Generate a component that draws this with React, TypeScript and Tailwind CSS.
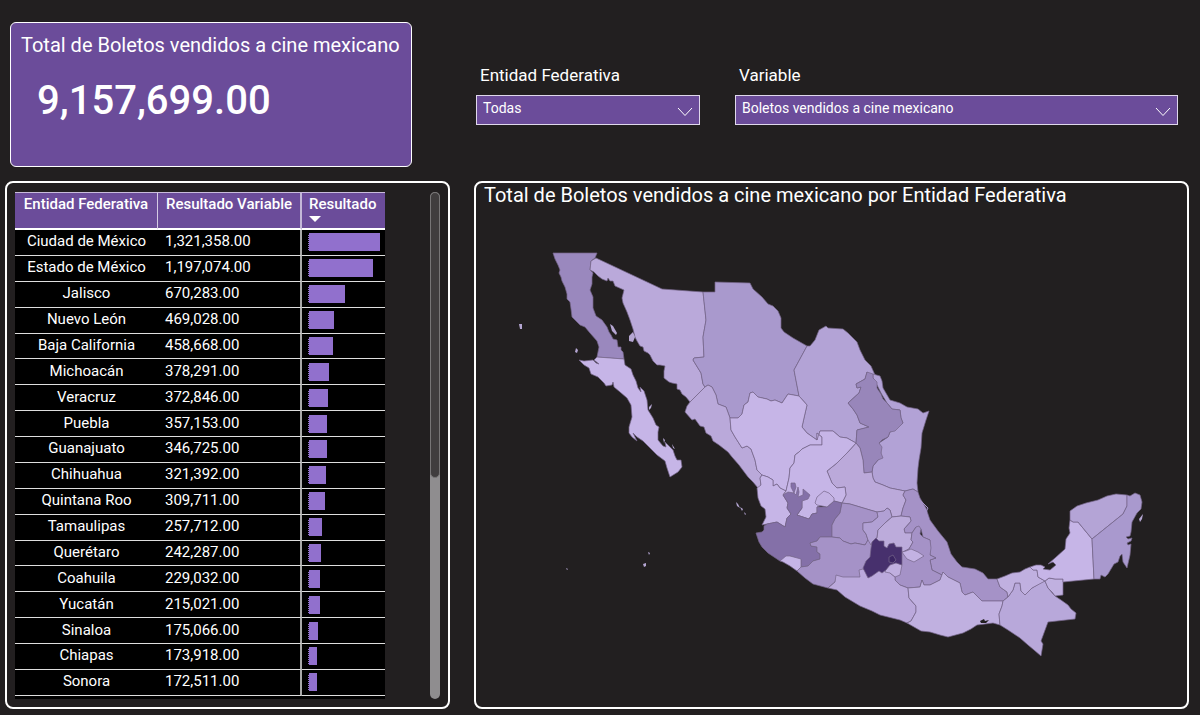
import { useState } from 'react';

type Row = { name: string; value: number };

const rows: Row[] = [
  { name: 'Ciudad de México', value: 1321358 },
  { name: 'Estado de México', value: 1197074 },
  { name: 'Jalisco', value: 670283 },
  { name: 'Nuevo León', value: 469028 },
  { name: 'Baja California', value: 458668 },
  { name: 'Michoacán', value: 378291 },
  { name: 'Veracruz', value: 372846 },
  { name: 'Puebla', value: 357153 },
  { name: 'Guanajuato', value: 346725 },
  { name: 'Chihuahua', value: 321392 },
  { name: 'Quintana Roo', value: 309711 },
  { name: 'Tamaulipas', value: 257712 },
  { name: 'Querétaro', value: 242287 },
  { name: 'Coahuila', value: 229032 },
  { name: 'Yucatán', value: 215021 },
  { name: 'Sinaloa', value: 175066 },
  { name: 'Chiapas', value: 173918 },
  { name: 'Sonora', value: 172511 },
];

const max = rows[0].value;

const format = (n: number) =>
  n.toLocaleString('en-US', { minimumFractionDigits: 2, maximumFractionDigits: 2 });

type Region = { name: string; fill: string; points: string };

// painted in order: the small central states go over their neighbours
const regions: Region[] = [
  {
    name: 'Baja California',
    fill: '#9a88be',
    points:
      '553,253 597,253 595,258 591,261 590,270 593,273 592,277 592,284 590,290 593,297 593,308 596,316 602,320 607,327 609,332 611,335 613,339 617,340 618,347 621,347 621,350 623,352 624,359 597,357 599,347 597,341 590,333 585,327 580,325 572,317 571,309 570,302 567,299 567,294 565,287 562,281 561,277 559,273 560,270 558,265 555,259',
  },
  {
    name: 'Baja California Sur',
    fill: '#c6b5e7',
    points:
      '579,360 584,361 593,360 596,363 599,364 594,360 597,357 624,359 625,365 631,369 633,375 636,381 638,388 641,392 640,387 644,391 647,400 648,410 653,418 656,425 659,427 658,432 658,440 663,446 666,447 665,442 668,445 673,450 675,456 677,460 681,460 682,467 678,472 670,477 667,468 665,461 657,455 652,450 648,446 643,441 637,437 633,433 637,441 632,437 629,433 629,427 632,417 631,405 627,398 620,392 614,387 613,382 612,385 606,386 604,383 598,377 591,374 589,368 584,365',
  },
  {
    name: 'Sonora',
    fill: '#baa9da',
    points:
      '591,261 596,258 662,289 703,292 706,320 703,337 704,357 694,358 693,360 701,373 703,384 705,387 690,402 686,397 682,394 680,390 677,389 677,384 672,383 669,382 664,378 664,371 665,366 660,365 657,365 653,361 650,355 648,353 644,351 643,347 640,346 637,341 635,337 633,329 630,320 627,312 623,303 622,298 624,290 615,286 613,281 610,281 608,278 607,281 602,279 598,276 594,272 590,270',
  },
  {
    name: 'Chihuahua',
    fill: '#a999cd',
    points:
      '703,292 715,292 715,282 750,283 753,289 762,297 768,304 773,306 778,311 781,318 781,328 784,332 793,338 807,346 794,370 799,396 788,394 782,403 775,400 771,401 767,399 758,397 753,392 750,393 748,402 744,405 742,414 738,418 730,418 726,407 718,404 716,395 712,387 708,385 705,387 703,384 701,373 693,360 694,358 704,357 703,337 706,320',
  },
  {
    name: 'Coahuila',
    fill: '#b3a3d6',
    points:
      '807,346 810,346 815,340 819,330 826,326 828,328 843,329 848,333 857,342 860,350 865,360 871,366 875,375 873,378 867,372 865,379 856,384 857,388 861,387 859,393 848,403 853,409 857,415 860,423 869,427 857,430 856,443 847,438 840,437 833,431 820,431 817,440 807,433 802,427 804,418 807,405 799,396 794,370',
  },
  {
    name: 'Tamaulipas',
    fill: '#b2a2d6',
    points:
      '873,374 880,376 882,381 883,388 890,400 900,403 907,407 918,409 923,413 929,411 926,420 922,433 921,448 919,460 918,468 917,483 918,492 913,489 905,491 890,488 883,485 875,482 873,478 872,472 873,466 878,460 881,453 879,443 888,437 890,432 903,423 901,418 900,410 892,409 887,403 881,393 877,385 873,378',
  },
  {
    name: 'Nuevo León',
    fill: '#9886ba',
    points:
      '867,372 873,374 873,378 877,382 877,388 881,394 883,399 887,403 892,409 900,410 901,418 903,423 895,431 890,432 888,437 882,440 879,443 882,447 881,453 883,458 878,460 873,466 872,472 864,473 863,460 860,448 856,443 857,430 869,427 860,423 857,415 853,409 848,403 859,393 861,387 857,388 856,384 865,379',
  },
  {
    name: 'Sinaloa',
    fill: '#baa9da',
    points:
      '705,387 708,385 712,387 716,395 718,404 726,407 730,418 731,430 735,437 742,448 747,446 751,449 755,460 757,470 762,475 760,478 761,485 758,488 753,482 748,477 739,465 732,457 728,452 719,445 713,441 711,436 706,433 704,427 700,426 695,419 692,420 685,412 687,406 690,402',
  },
  {
    name: 'Durango',
    fill: '#c6b5e7',
    points:
      '730,418 738,418 742,414 744,405 748,402 750,393 753,392 758,397 767,399 771,401 775,400 782,403 788,394 799,396 807,405 804,418 802,427 807,433 817,440 817,433 822,437 822,445 810,445 802,449 799,452 795,455 794,463 790,468 789,478 786,491 780,488 777,484 773,486 773,480 768,477 762,475 757,470 755,460 751,449 747,446 742,448 735,437 731,430',
  },
  {
    name: 'Nayarit',
    fill: '#c6b5e7',
    points:
      '762,475 768,477 773,480 773,486 777,484 780,488 786,491 783,495 788,503 787,508 791,514 787,518 785,527 777,522 767,524 762,525 766,517 765,509 761,506 758,498 757,488 761,485 760,478',
  },
  {
    name: 'San Luis Potosí',
    fill: '#bba9da',
    points:
      '856,443 860,448 863,460 864,473 872,472 873,478 875,482 883,485 890,488 905,491 903,495 906,500 903,508 901,516 892,517 890,510 887,508 884,511 877,512 870,510 860,507 850,504 842,503 846,495 845,487 837,488 832,483 827,471 837,463 847,453',
  },
  {
    name: 'Zacatecas',
    fill: '#c6b5e7',
    points:
      '817,440 820,431 833,431 840,437 847,438 856,443 847,453 837,463 827,471 832,483 837,488 845,487 846,495 842,503 834,501 817,507 817,513 812,514 809,519 797,515 802,508 802,501 783,495 786,491 789,478 790,468 794,463 795,455 799,452 802,449 810,445 822,445 822,437 817,433',
  },
  {
    name: 'Jalisco',
    fill: '#8470a8',
    points:
      '783,495 788,492 794,493 791,487 791,483 795,483 796,487 794,493 796,495 798,487 799,492 798,497 803,495 803,489 810,495 808,499 802,501 802,508 797,515 809,519 812,514 817,513 817,507 827,507 834,501 842,503 840,513 835,519 832,525 832,537 820,537 817,541 810,543 811,546 817,547 817,552 820,554 820,559 813,561 808,566 801,567 801,560 790,556 780,561 768,553 762,547 759,542 756,533 762,532 764,530 764,526 767,524 777,522 785,527 787,518 791,514 787,508 788,503',
  },
  {
    name: 'Aguascalientes',
    fill: '#c3b2e3',
    points: '824,491 829,493 834,498 834,501 827,507 817,505 815,503 817,497',
  },
  {
    name: 'Guanajuato',
    fill: '#a592c7',
    points:
      '842,503 850,504 860,507 870,510 877,512 878,517 872,522 863,523 863,530 866,534 868,540 865,545 855,543 851,544 843,541 840,538 832,537 832,525 835,519 840,513',
  },
  {
    name: 'Michoacán',
    fill: '#a592c7',
    points:
      '810,543 817,541 820,537 832,537 840,538 843,541 851,544 855,543 865,545 868,540 880,548 880,562 866,580 860,579 843,579 837,577 835,582 828,588 813,584 805,578 797,571 801,567 808,566 813,561 820,559 820,554 817,552 817,547 811,546',
  },
  {
    name: 'Querétaro',
    fill: '#b1a0d4',
    points:
      '877,512 884,511 887,508 890,510 892,517 885,523 878,530 877,538 873,541 871,545 868,540 866,534 863,530 863,523 872,522 878,517',
  },
  {
    name: 'Veracruz',
    fill: '#a592c7',
    points:
      '905,491 913,489 918,492 920,498 926,508 930,520 938,531 947,542 951,554 957,562 962,567 975,569 983,573 988,579 997,579 1000,587 1007,592 1008,597 1003,601 982,601 973,592 965,595 962,592 960,583 948,577 943,572 942,575 932,570 930,560 936,558 930,555 930,540 923,537 921,529 916,527 912,533 905,533 904,529 911,521 910,517 901,516 903,508 906,500 903,495',
  },
  {
    name: 'Hidalgo',
    fill: '#bcabdb',
    points:
      '892,517 901,516 910,517 911,521 904,529 905,533 912,533 911,540 913,542 909,549 903,552 898,555 885,555 877,548 874,540 877,538 878,530 885,523',
  },
  {
    name: 'Puebla',
    fill: '#a592c7',
    points:
      '912,533 916,527 919,526 921,529 920,534 923,537 930,540 931,548 930,555 936,558 930,560 932,570 942,575 940,580 930,585 924,585 922,580 920,587 908,588 900,585 895,580 895,570 895,560 898,553 903,552 909,549 913,542 911,540',
  },
  {
    name: 'Colima',
    fill: '#c6b5e7',
    points: '780,561 786,556 790,556 801,559 801,567 797,571 790,566 783,562',
  },
  {
    name: 'Guerrero',
    fill: '#bba9dc',
    points:
      '828,588 835,582 836,575 843,577 860,577 859,570 863,569 868,572 885,564 889,572 895,577 895,580 900,585 908,588 909,598 916,606 916,612 911,621 907,623 900,620 880,615 872,611 860,606 845,597 837,590',
  },
  {
    name: 'Oaxaca',
    fill: '#c0b0e0',
    points:
      '908,588 920,587 922,580 924,585 930,585 940,580 943,572 948,577 960,583 962,592 965,595 973,592 982,601 1003,601 1002,606 999,614 1000,625 993,623 977,625 971,629 963,633 948,637 940,635 930,632 921,631 907,623 911,621 916,612 916,606 909,598',
  },
  {
    name: 'Morelos',
    fill: '#c0afdf',
    points: '888,563 895,562 902,565 901,570 900,575 895,577 890,573 885,572',
  },
  {
    name: 'Estado de México',
    fill: '#47306d',
    points:
      '872,542 876,538 879,541 884,541 884,546 887,548 889,544 894,543 896,547 902,547 902,565 896,563 890,565 886,570 882,573 879,571 872,576 868,578 863,568 866,561 870,557 871,548',
  },
  {
    name: 'Ciudad de México',
    fill: '#3b2562',
    points: '889,557 893,555 896,560 893,563 889,562',
  },
  {
    name: 'Tlaxcala',
    fill: '#c3b2e3',
    points: '902,552 906,551 911,549 918,552 924,556 919,559 914,562 907,559 904,555',
  },
  {
    name: 'Chiapas',
    fill: '#b8a8da',
    points:
      '1003,601 1008,597 1013,590 1015,583 1020,583 1021,591 1025,595 1032,588 1042,582 1045,581 1048,588 1055,596 1061,600 1068,605 1071,609 1076,613 1075,619 1048,622 1041,641 1043,644 1041,656 1034,650 1028,645 1020,638 1008,630 1000,625 999,614 1002,606',
  },
  {
    name: 'Tabasco',
    fill: '#c0b0e0',
    points:
      '997,579 1005,576 1012,573 1020,572 1025,569 1030,567 1033,570 1037,570 1038,577 1045,581 1049,578 1055,579 1063,579 1063,595 1055,596 1052,592 1048,588 1045,581 1032,588 1025,595 1021,591 1020,583 1015,583 1013,590 1008,597 1007,592 1000,587',
  },
  {
    name: 'Campeche',
    fill: '#c6b5e7',
    points:
      '1030,567 1036,565 1041,565 1045,567 1043,569 1050,570 1056,565 1053,562 1048,564 1055,558 1065,549 1066,539 1070,533 1069,528 1070,520 1073,522 1078,522 1092,539 1094,579 1063,582 1063,579 1055,579 1049,578 1045,581 1038,577 1037,570 1033,570',
  },
  {
    name: 'Yucatán',
    fill: '#b4a4d6',
    points:
      '1070,520 1070,511 1077,506 1086,503 1098,500 1107,496 1116,494 1127,495 1127,506 1123,514 1092,539 1078,522 1073,522',
  },
  {
    name: 'Quintana Roo',
    fill: '#a999ce',
    points:
      '1127,495 1130,496 1135,493 1140,495 1142,502 1141,509 1137,513 1132,522 1131,532 1130,536 1126,537 1128,539 1132,538 1131,541 1127,543 1128,545 1131,544 1130,555 1127,568 1123,562 1122,554 1120,556 1118,562 1114,564 1111,569 1108,574 1105,577 1101,575 1100,579 1094,579 1092,539 1123,514 1127,506',
  },
];

// islands too small to belong to a state outline
const islands = [
  '519,324 522,324 522,329 520,329',
  '576,348 578,350 577,353 575,352',
  '610,324 613,326 617,333 616,335 612,331',
  '629,336 633,332 635,337 633,342 629,341',
  '649,407 652,404 651,408 649,410',
  '663,438 665,440 664,443',
  '672,444 675,449 673,448',
  '736,502 738,504 740,508 737,506',
  '740,507 743,509 742,511',
  '744,512 746,514 745,515',
  '643,564 646,563 646,566 644,567',
  '648,552 650,553 649,555',
  '566,568 568,569 567,570',
  '1139,519 1143,514 1142,519 1140,522',
];

function MexicoMap() {
  return (
    <svg
      viewBox="476 210 711 497"
      className="block w-full"
      role="img"
      aria-label="Mapa por Entidad Federativa"
    >
      <g stroke="#75668a" strokeWidth="0.7" strokeLinejoin="round">
        {regions.map((r) => (
          <polygon key={r.name} points={r.points} fill={r.fill} />
        ))}
      </g>
      <g fill="#b5a6d2">
        {islands.map((p) => (
          <polygon key={p} points={p} />
        ))}
      </g>
      <polyline points="921,501 928,508 926,512" fill="none" stroke="#a592c7" />
      <polygon points="980,621 984,619 985,621 989,620 986,623 981,623" fill="#221f20" />
    </svg>
  );
}

type FilterProps = { id: string; label: string; options: string[] };

function Filter({ id, label, options }: FilterProps) {
  const [value, setValue] = useState(options[0]);

  return (
    <div className="flex flex-col">
      <label htmlFor={id} className="pl-1 mb-2 text-[17px] leading-6">
        {label}
      </label>
      <div className="relative">
        <select
          id={id}
          value={value}
          onChange={(e) => setValue(e.target.value)}
          className="block appearance-none w-full h-[30px] pl-1.5 pr-8 pb-1 text-[14px] leading-5 bg-[#6b4c9a] border border-[#e0d8ec] rounded-none"
        >
          {options.map((o) => (
            <option key={o}>{o}</option>
          ))}
        </select>
        <svg
          viewBox="0 0 16 10"
          className="absolute right-[7px] bottom-2 w-4 h-2.5 pointer-events-none"
          fill="none"
          stroke="#fff"
        >
          <path d="M1 1l7 7.5L15 1" />
        </svg>
      </div>
    </div>
  );
}

function ResultsTable() {
  return (
    <table className="w-full h-[504px] table-fixed border-separate border-spacing-0 text-[15px] leading-5">
      <thead>
        <tr className="h-[38px] bg-[#6b4c9a] align-top">
          <th className="w-[143px] p-0 pt-px font-medium border-t border-r border-b-2 border-t-[#c9bcdc] border-r-[#d5cbe4] border-b-white">
            Entidad Federativa
          </th>
          <th className="w-[144px] p-0 pt-px font-medium border-t border-r-2 border-b-2 border-t-[#c9bcdc] border-r-[#c4b8d8] border-b-white">
            Resultado Variable
          </th>
          <th className="p-0 pt-px pl-[7px] font-medium text-left border-t border-b-2 border-t-[#c9bcdc] border-b-white">
            Resultado
            <svg viewBox="0 0 12 6" className="block w-3 h-1.5 mt-0.5" fill="#fff">
              <path d="M0 0h12L6 6z" />
            </svg>
          </th>
        </tr>
      </thead>
      <tbody>
        {rows.map((row) => (
          <tr key={row.name} className="bg-black">
            <td className="p-0 pb-0.5 text-center border-b border-[#dedede]">{row.name}</td>
            <td className="p-0 pb-0.5 pl-[7px] border-b border-r-2 border-b-[#dedede] border-r-[#a9a9a9]">
              {format(row.value)}
            </td>
            <td className="p-0 pl-1.5 pr-[5px] border-b border-[#dedede]">
              <div
                className="h-[18px] bg-[#9170cd] border-l border-dotted border-black"
                style={{ width: `${(row.value / max) * 100}%` }}
              />
            </td>
          </tr>
        ))}
      </tbody>
    </table>
  );
}

export default function App() {
  return (
    <main className="min-h-screen bg-[#221f20] text-white font-[Roboto,sans-serif] pt-[22px] pb-1.5 pl-[5px] pr-[11px]">
      <div className="grid grid-cols-[minmax(0,445fr)_minmax(0,715fr)] gap-x-6 gap-y-3.5">
        <section className="h-[145px] ml-[5px] mr-[38px] bg-[#6b4c9a] border border-white rounded-md">
          <h2 className="pl-2.5 pt-2 text-[20px] leading-7">
            Total de Boletos vendidos a cine mexicano
          </h2>
          <p className="pl-[26px] pt-3.5 text-[40px] leading-[56px] font-medium">9,157,699.00</p>
        </section>

        <section className="grid grid-cols-[minmax(0,224fr)_minmax(0,443fr)] gap-x-[35px] content-start pt-[41px] pl-0.5 pr-[11px]">
          <Filter id="entidad" label="Entidad Federativa" options={['Todas', ...rows.map((r) => r.name)]} />
          <Filter id="variable" label="Variable" options={['Boletos vendidos a cine mexicano']} />
        </section>

        <section className="flex pt-[9px] pb-2 px-2 border-2 border-white rounded-lg">
          <div className="flex-1 border-b-[3px] border-black">
            <ResultsTable />
          </div>
          <div className="w-2.5 ml-[45px] rounded-full bg-[#8f8d8f]">
            <div className="h-[286px] rounded-full bg-[#403d3e] border border-[#777576]" />
          </div>
        </section>

        <section className="border-2 border-white rounded-lg">
          <h2 className="h-[27px] pl-2 text-[20px] leading-6">
            Total de Boletos vendidos a cine mexicano por Entidad Federativa
          </h2>
          <MexicoMap />
        </section>
      </div>
    </main>
  );
}
